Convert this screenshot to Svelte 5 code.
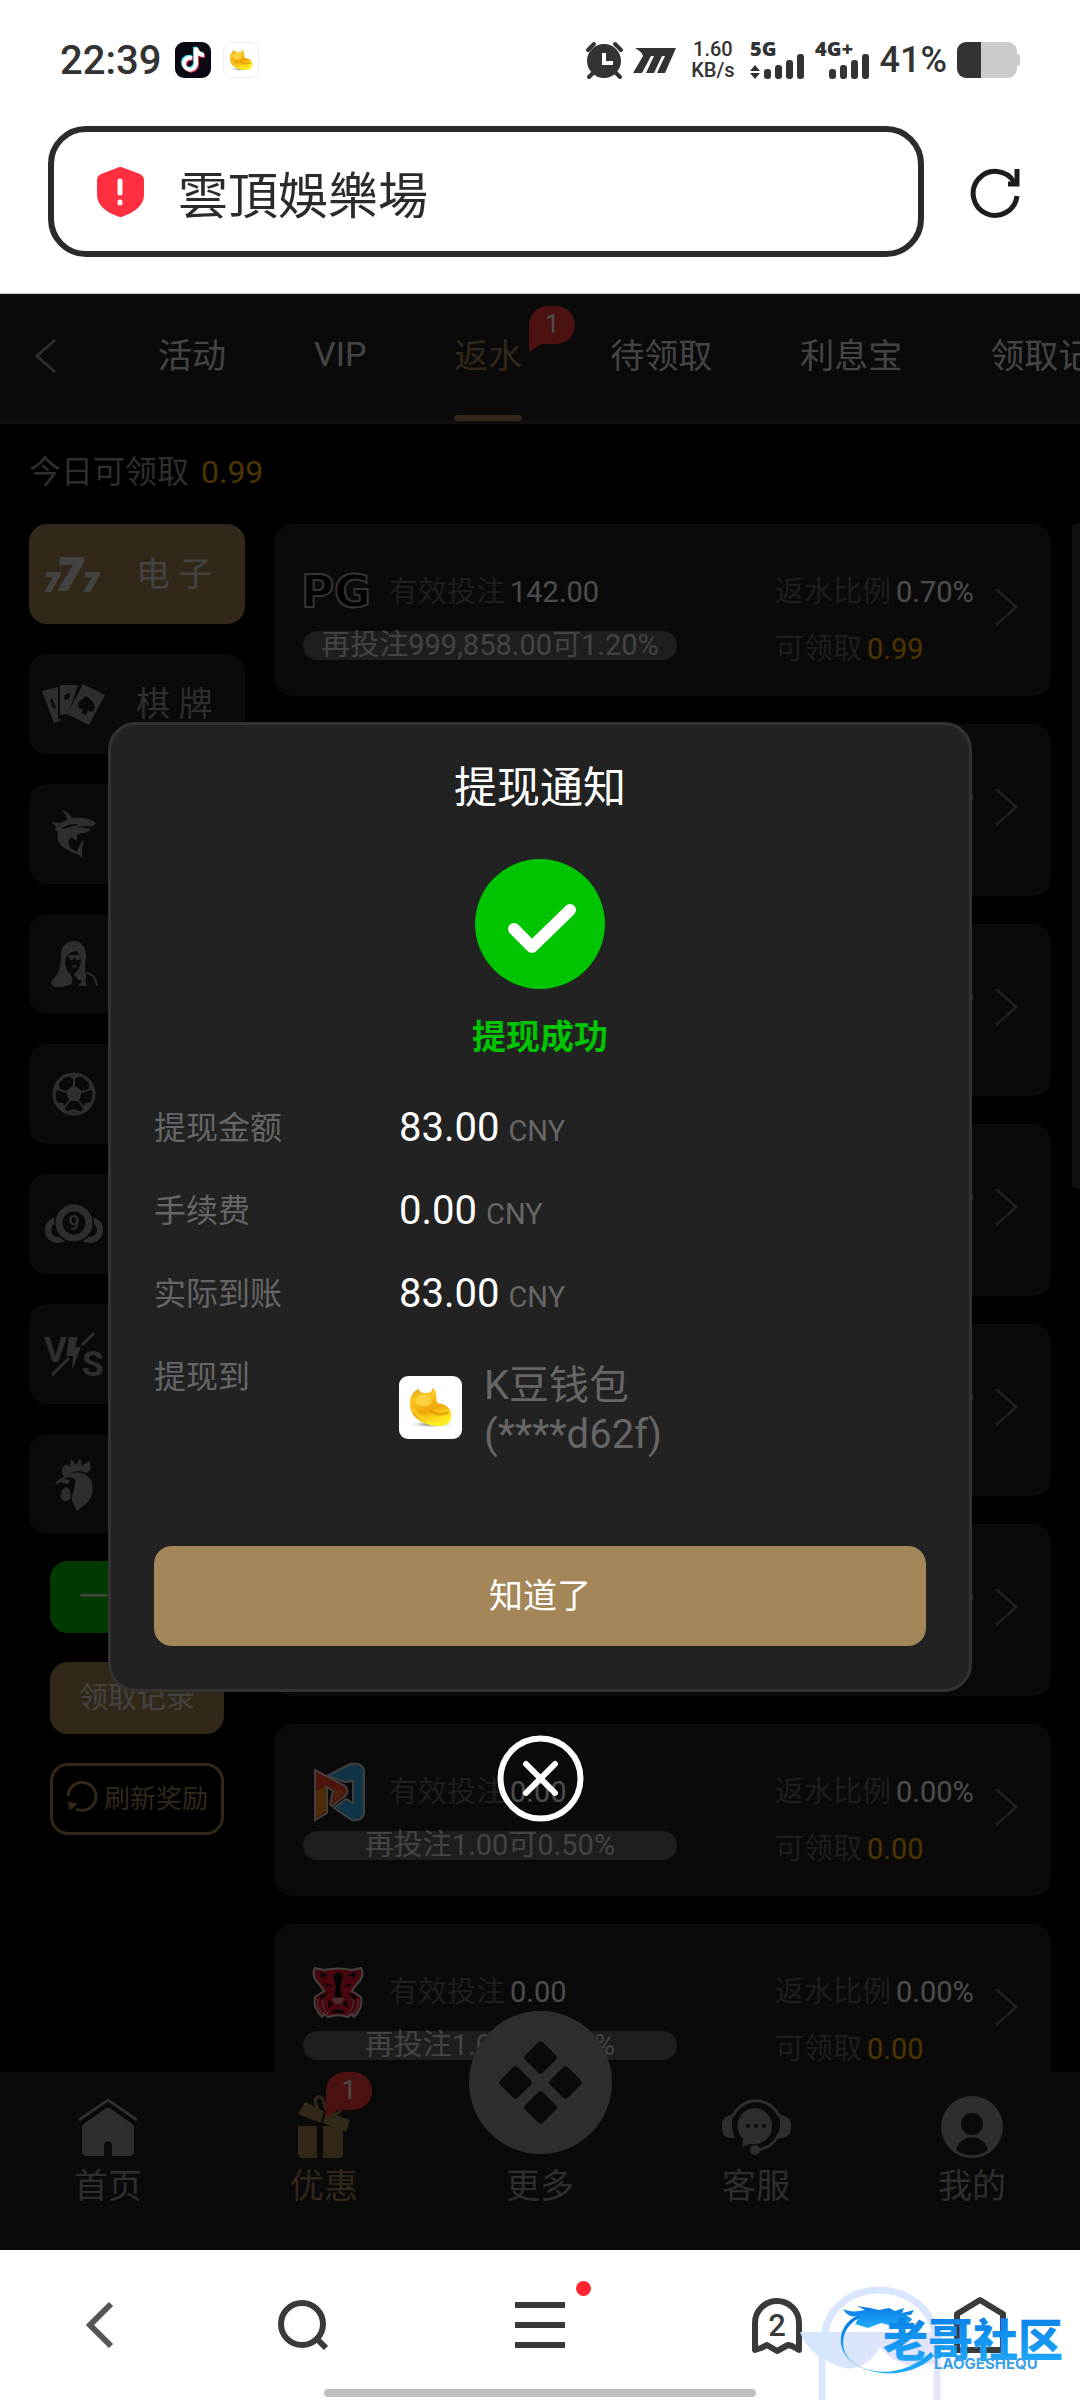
<script lang="ts">
	type Game = {
		logo: string;
		bet: string;
		tip: string;
		rate: string;
		claim: string;
	};

	const tabs = ['活动', 'VIP', '返水', '待领取', '利息宝', '领取记录'];

	const categories = [
		{ icon: 'slots', label: '电 子' },
		{ icon: 'cards', label: '棋 牌' },
		{ icon: 'shark', label: '捕 鱼' },
		{ icon: 'live', label: '真 人' },
		{ icon: 'soccer', label: '体 育' },
		{ icon: 'lottery', label: '彩 票' },
		{ icon: 'versus', label: '电 竞' },
		{ icon: 'rooster', label: '斗 鸡' }
	];

	const empty = { bet: '0.00', tip: '再投注1.00可0.50%', rate: '0.00%', claim: '0.00' };

	const games: Game[] = [
		{ logo: 'pg', bet: '142.00', tip: '再投注999,858.00可1.20%', rate: '0.70%', claim: '0.99' },
		{ logo: '', ...empty },
		{ logo: '', ...empty },
		{ logo: '', ...empty },
		{ logo: '', ...empty },
		{ logo: '', ...empty },
		{ logo: 'ribbon', ...empty },
		{ logo: 'tiger', ...empty }
	];

	const amounts = [
		{ label: '提现金额', value: '83.00' },
		{ label: '手续费', value: '0.00' },
		{ label: '实际到账', value: '83.00' }
	];

	const navItems = [
		{ icon: 'home', label: '首页' },
		{ icon: 'gift', label: '优惠' },
		{ icon: 'more', label: '更多' },
		{ icon: 'service', label: '客服' },
		{ icon: 'user', label: '我的' }
	];

	let address = $state('雲頂娛樂場');
	let activeTab = $state('返水');
	let activeCategory = $state('slots');
	let activeNav = $state('gift');
	let noticeOpen = $state(true);

	function closeNotice() {
		noticeOpen = false;
	}
</script>

{#snippet bean()}
	<svg class="bean" viewBox="0 0 64 64" aria-hidden="true">
		<defs>
			<linearGradient id="bean-fill" x1="0" y1="0" x2="0.4" y2="1">
				<stop offset="0" stop-color="#dc9a08" />
				<stop offset="0.3" stop-color="#fbc926" />
				<stop offset="0.65" stop-color="#f0a60a" />
				<stop offset="1" stop-color="#fff21c" />
			</linearGradient>
			<radialGradient id="bean-shade">
				<stop offset="0" stop-color="#555" />
				<stop offset="1" stop-color="#fff" stop-opacity="0" />
			</radialGradient>
		</defs>
		<ellipse cx="33" cy="49" rx="25" ry="4" fill="url(#bean-shade)" />
		<path
			d="M20 13c-6 3-9 8-9 15 0 13 11 22 29 23 9 0 13-5 13-11 0-7-5-11-12-12-2 0-3-3-3-6 0-5-1-8-4-10 0 4-2 5-5 5-5 1-8 0-9-4z"
			fill="url(#bean-fill)"
		/>
		<ellipse cx="25" cy="25" rx="8" ry="6" fill="#ffdc4d" opacity="0.7" />
		<path d="M14 33c5 9 16 14 32 12" fill="none" stroke="#ffd52b" stroke-width="3" opacity="0.7" />
		<path d="M31 35c5 4 12 5 19 2" fill="none" stroke="#e08c04" stroke-width="3" opacity="0.6" />
	</svg>
{/snippet}

{#snippet categoryIcon(name: string)}
	<svg class="category-icon" viewBox="0 0 60 60" fill="currentColor" aria-hidden="true">
		{#if name === 'slots'}
			<text class="seven" x="1" y="47" font-size="25">7</text>
			<text class="seven" x="40" y="47" font-size="25">7</text>
			<text class="seven" x="13" y="46" font-size="45">7</text>
		{:else if name === 'cards'}
			<path d="M-2 17 14 13v32l4 1-8 3z" />
			<path d="M16 11h18L24 40l-8 1z" />
			<path d="m39 10 22 11-16 30-22-11z" />
			<path class="hole" d="M42 22c8 5 11 11 7 15-2 1-4 1-5-1l-2 5-5-2 3-4c-3 1-6-1-6-5 1-4 5-5 8-8zM26 19c-5 0-7 4-5 7l4-1zM8 24c-3 2-2 5 0 5-1 4 1 6 4 5z" />
		{:else if name === 'shark'}
			<path d="M17 5c5 2 9 5 11 9 9-1 18 0 24 5-2 3-4 4-8 3l-14 1c7 0 14 1 17 2-3 4-8 4-13 5-3 4 1 6-3 6l-4-3c-4 5-3 8 1 12l5 3c2-6 3-9 7-12-1 4-2 8-2 12l1 7c-3-3-6-6-10-6l-7-4c-7-4-10-10-8-17l-3-2 1-3-5-5 9 1 7-3c0-5-3-8-6-11z" />
			<path class="hole" d="M18 24c6-4 12-4 17-4l-5 2-11 3z" />
		{:else if name === 'live'}
			<path d="M30 7c-8 0-13 6-13 14 0 9-1 16-5 21-4 3-6 7-4 9 4 4 14 2 19-1 3-4 1-9-3-12-2-5-4-10-2-15 3-4 7-6 10-6 3 2 5 6 5 11-2 7-4 10-7 12l4 6c7 1 9-1 8-6-2-8 0-12 0-18 0-9-5-15-12-15z" />
			<path d="M24 21h13l-2 5h-3l-1-3-2 3h-3zM27 32l7-1-3 3zM34 52l8-10c-1 5 0 7 1 10z" />
			<path d="M43 39c6 1 9 5 10 13" fill="none" stroke="currentColor" stroke-width="2" />
		{:else if name === 'soccer'}
			<circle cx="30" cy="30" r="20" fill="none" stroke="currentColor" stroke-width="3" />
			<path d="m30 21 8 6-3 10H25l-3-10z" />
			<path d="M30 11v12M47 25l-9 3M41 46l-6-9M19 46l6-9M13 25l9 3" stroke="currentColor" stroke-width="2" />
			<path d="m22 10 8 6 8-6zM45 16v9l6 5zM50 38l-9 1-3 9zM38 48l-8-3-8 3zM22 48l-3-9-9-1zM9 30l6-5v-9z" />
		{:else if name === 'lottery'}
			<circle cx="14" cy="36" r="10" fill="none" stroke="currentColor" stroke-width="6" />
			<circle cx="46" cy="36" r="10" fill="none" stroke="currentColor" stroke-width="6" />
			<circle class="hole" cx="30" cy="29" r="20" />
			<circle cx="30" cy="29" r="15" fill="none" stroke="currentColor" stroke-width="7" />
			<text x="30" y="36" font-size="20" font-weight="500" text-anchor="middle">9</text>
		{:else if name === 'versus'}
			<text x="0" y="38" font-size="35" font-weight="700">V</text>
			<text x="38" y="52" font-size="35" font-weight="700">S</text>
			<path d="M25 13h9l-3 10h6L28 46l1-14h-7z" />
			<path d="M50 9 38 21M25 34 8 51" stroke="currentColor" stroke-width="3" />
		{:else}
			<path d="M18 19c-1-6 3-9 6-8l2 2 1-8 5 6 4-7 2 8 7-5c3 5 2 9-2 12-8-3-15-2-20 3-2 2-4 0-5-3z" />
			<path d="M22 22c9-6 20-4 25 4 3 8 2 17-4 23l-10 8c-5-8-7-14-3-20 0-7 4-9-2-13l-4 6-4-1c-4-2-6 1-9 2 1-4 5-7 11-9z" />
			<path d="M22 33c4 2 6 7 4 12-3 3-7 3-9-1-1-4 1-9 5-11z" />
			<path class="hole" d="M20 25c5-3 10-2 12 2l-3-1-1 3-3-3z" />
		{/if}
	</svg>
{/snippet}

{#snippet gameLogo(name: string)}
	<svg class="game-logo" viewBox="0 0 70 58" aria-hidden="true">
		{#if name === 'pg'}
			<text class="pg" x="-2" y="44">PG</text>
		{:else if name === 'ribbon'}
			<path d="m24 13 23-12q14-2 14 8v42q-3 8-12 6L31 45l12-9 7 4V18l-8 1z" fill="#36b0f0" stroke="#d8d8d8" stroke-width="2" />
			<path d="m12 7 30 16c4 4 3 7 0 10L29 43l-2-2 3-13-6-4v26l-12 7z" fill="#ff4423" stroke="#e8d0c8" stroke-width="2" />
			<path d="M13 28v26l10-6V23z" fill="#ff9420" />
			<path d="m31 27 9 1c0 3-3 5-10 10z" fill="#ff8030" />
		{:else if name === 'tiger'}
			<path
				d="m12 5 9 2c9-2 19-2 28 0l9-2c3 5 1 12-4 16l-5 7 9 6c2 8-1 14-7 20l-2-3-4 3c-6-2-14-2-20 0l-4-3-2 3c-6-6-9-12-7-20l9-6-5-7c-5-4-7-11-4-16z"
				fill="#f01830"
				stroke="#e8d8d8"
				stroke-width="2"
			/>
			<path d="m16 9 9 3-6 3zM54 9l-9 3 6 3zM35 9l5 3-3 12 2 10h-8l2-10-3-12zM22 20l9 4-9-1zM48 20l-9 4 9-1zM16 33l10-4-8 8zM54 33l-10-4 8 8zM26 37l-1 8 5-4zM44 37l1 8-5-4zM28 50c3-5 11-5 14 0z" fill="#0a0a0a" />
			<path d="M29 35h12l-3 6h-6z" fill="#ff9a9a" />
			<path d="M15 36c-1 6 1 11 5 15M55 36c1 6-1 11-5 15M20 36c-1 6 1 11 5 15M50 36c1 6-1 11-5 15" fill="none" stroke="#ffc8c8" stroke-width="1" />
		{/if}
	</svg>
{/snippet}

{#snippet navIcon(name: string)}
	{#if name === 'home'}
		<svg class="nav-icon" viewBox="0 0 62 62" fill="currentColor" aria-hidden="true">
			<path d="M2 24 31 4l29 20" fill="none" stroke="currentColor" stroke-width="3" />
			<path d="M31 12c2 0 4 1 6 3l17 12c2 1 3 3 3 5v23c0 3-2 5-5 5H35V49c0-5-8-5-8 0v11H10c-3 0-5-2-5-5V32c0-2 1-4 3-5l17-12c2-2 4-3 6-3z" />
		</svg>
	{:else if name === 'gift'}
		<svg class="nav-icon" viewBox="0 0 62 62" fill="currentColor" aria-hidden="true">
			<path d="M5 30h19v32H9c-2 0-4-2-4-4zM30 30h20v28c0 2-2 4-4 4H30z" />
			<path d="m12 6 19 9-3 12-23-9zM33 16l24 8-4 12-23-9z" />
			<path d="M25 12c-7-8 1-16 5-8l3 10M34 14c8 8 15 3 13-4" fill="none" stroke="currentColor" stroke-width="3" />
		</svg>
	{:else if name === 'more'}
		<svg class="more-icon" viewBox="0 0 143 143" fill="currentColor" aria-hidden="true">
			<circle cx="71.5" cy="71.5" r="71.5" />
			<g class="diamonds">
				<rect x="59" y="34" width="25" height="25" rx="4" transform="rotate(45 71.5 46.5)" />
				<rect x="34" y="59" width="25" height="25" rx="4" transform="rotate(45 46.5 71.5)" />
				<rect x="84" y="59" width="25" height="25" rx="4" transform="rotate(45 96.5 71.5)" />
				<rect x="59" y="84" width="25" height="25" rx="4" transform="rotate(45 71.5 96.5)" />
			</g>
		</svg>
	{:else if name === 'service'}
		<svg class="nav-icon wide" viewBox="0 0 70 62" fill="currentColor" aria-hidden="true">
			<path d="M12 20a25 25 0 0 1 46 0M59 36c-4 10-11 17-24 18" fill="none" stroke="currentColor" stroke-width="3" />
			<path d="M13 18c-3 7-3 15 1 24-9 1-13-3-13-9v-5c0-6 5-8 12-10zM57 18c3 7 3 15-1 24 9 1 14-3 14-9v-5c0-6-6-8-13-10z" />
			<path d="M35 12a18 18 0 1 1-4 36c-4 0-7 2-10 3l1-8a18 18 0 0 1 13-31z" />
			<circle cx="34" cy="54" r="5" />
			<g class="nav-hole">
				<circle cx="27" cy="30" r="2" />
				<circle cx="35" cy="30" r="2" />
				<circle cx="43" cy="30" r="2" />
			</g>
		</svg>
	{:else}
		<svg class="nav-icon" viewBox="0 0 62 62" fill="currentColor" aria-hidden="true">
			<circle cx="31" cy="31" r="31" />
			<circle class="nav-hole" cx="31" cy="28" r="11" />
			<path class="nav-hole" d="M15 54c4-17 28-17 32 0-9 7-23 7-32 0z" />
		</svg>
	{/if}
{/snippet}

{#snippet badge()}
	<span class="badge">
		<svg viewBox="0 0 46 46" aria-hidden="true">
			<path d="M19 0h8a19 19 0 0 1 0 38H12L0 46V19A19 19 0 0 1 19 0z" fill="#ff3b3b" />
		</svg>
		<span>1</span>
	</span>
{/snippet}

<div class="screen">
	<header>
		<div class="status">
			<span class="clock">22:39</span>
			<svg class="app-icon" viewBox="0 0 36 36" aria-hidden="true">
				<rect width="36" height="36" rx="9" fill="#0b0713" />
				<g fill="none" stroke-width="4">
					<path d="M16 15a6 6 0 1 0 4 6V5c1 5 4 7 8 7" stroke="#35e5e5" />
					<path d="M18 17a6 6 0 1 0 4 6V7c1 5 4 7 8 7" stroke="#f5315c" />
					<path d="M17 16a6 6 0 1 0 4 6V6c1 5 4 7 8 7" stroke="#fff" />
				</g>
			</svg>
			<span class="app-icon bordered">{@render bean()}</span>

			<div class="status-right">
				<svg width="37" height="37" viewBox="0 0 37 37" fill="#333" aria-hidden="true">
					<circle cx="18" cy="19" r="17" />
					<path d="m2 8 6-6M29 2l6 6M7 31l-4 4M30 31l4 4" stroke="#333" stroke-width="4" stroke-linecap="round" />
					<path d="M18 11v10h9" fill="none" stroke="#fff" stroke-width="4" />
				</svg>
				<svg width="43" height="25" viewBox="0 0 43 25" fill="#333" aria-hidden="true">
					<path d="M2 0h41L32 25h-8l8-17h-3l-8 17h-8l8-17h-3L9 25H0L10 8C9 4 5 2 2 0z" />
				</svg>
				<span class="speed">1.60<br />KB/s</span>
				<svg width="55" height="37" viewBox="0 0 55 37" fill="#333" role="img" aria-label="5G">
					<text class="net" x="0" y="14">5G</text>
					<path d="m5 23 5 6H0zM5 37l5-6H0z" />
					<rect x="14" y="27" width="7" height="10" rx="3" />
					<rect x="25" y="23" width="7" height="14" rx="3" />
					<rect x="36" y="18" width="7" height="19" rx="3" />
					<rect x="47" y="12" width="7" height="25" rx="3" />
				</svg>
				<svg width="55" height="37" viewBox="0 0 55 37" fill="#333" role="img" aria-label="4G+">
					<text class="net" x="0" y="14">4G+</text>
					<rect x="14" y="27" width="7" height="10" rx="3" />
					<rect x="25" y="23" width="7" height="14" rx="3" />
					<rect x="36" y="18" width="7" height="19" rx="3" />
					<rect x="47" y="12" width="7" height="25" rx="3" />
				</svg>
				<span class="percent">41%</span>
				<svg width="63" height="36" viewBox="0 0 63 36" aria-hidden="true">
					<path d="M24 0h27a9 9 0 0 1 9 9v3h1a2 2 0 0 1 2 2v8a2 2 0 0 1-2 2h-1v3a9 9 0 0 1-9 9H24z" fill="#ccc" />
					<path d="M9 0h15v36H9a9 9 0 0 1-9-9V9a9 9 0 0 1 9-9z" fill="#333" />
				</svg>
			</div>
		</div>

		<div class="address-row">
			<label class="address">
				<svg width="47" height="50" viewBox="0 0 47 50" aria-hidden="true">
					<path d="M20 1q3-2 7 0l16 6q4 2 4 6v15c0 10-9 17-20 21q-3 2-7 0C9 45 0 38 0 28V13q0-4 4-6z" fill="#ff2f3f" />
					<path d="M23 14v12M23 35v1" stroke="#fff" stroke-width="5" stroke-linecap="round" />
				</svg>
				<input type="text" aria-label="Address" bind:value={address} />
			</label>
			<button class="plain" type="button" aria-label="Reload">
				<svg width="50" height="50" viewBox="0 0 50 50" fill="none" stroke="#1c1c1c" stroke-width="5" aria-hidden="true">
					<path d="M47 29A22 22 0 1 1 44 15" />
					<path d="M38 17h9V2" />
				</svg>
			</button>
		</div>
	</header>

	<main>
		<nav class="tabs">
			<button class="plain back" type="button" aria-label="返回">
				<svg width="22" height="34" viewBox="0 0 22 34" fill="none" stroke="currentColor" stroke-width="3" aria-hidden="true">
					<path d="M20 1 2 17l18 16" />
				</svg>
			</button>
			{#each tabs as tab}
				<button class="tab" class:active={tab === activeTab} type="button" onclick={() => (activeTab = tab)}>
					{tab}
					{#if tab === '返水'}{@render badge()}{/if}
				</button>
			{/each}
		</nav>

		<div class="content">
			<p class="today">今日可领取 <strong>0.99</strong></p>

			<div class="columns">
				<aside>
					<div class="categories">
						{#each categories as item}
							<button
								class="category"
								class:active={item.icon === activeCategory}
								type="button"
								onclick={() => (activeCategory = item.icon)}
							>
								{@render categoryIcon(item.icon)}
								<span>{item.label}</span>
							</button>
						{/each}
					</div>
					<div class="actions">
						<button class="action green" type="button">一键领取</button>
						<button class="action gold" type="button">领取记录</button>
						<button class="action outline" type="button">
							<svg width="32" height="32" viewBox="0 0 32 32" fill="none" stroke="currentColor" stroke-width="3" aria-hidden="true">
								<path d="M2 16a14 14 0 1 1 8 13" />
								<path d="m2 22 9 2-7 6z" fill="currentColor" stroke-width="1" />
							</svg>
							刷新奖励
						</button>
					</div>
				</aside>

				<div class="games">
					{#each games as game}
						<article class="game">
							<div class="bet">
								{@render gameLogo(game.logo)}
								<span class="muted">有效投注</span>
								<span>{game.bet}</span>
							</div>
							<div class="rate"><span class="muted">返水比例</span><span>{game.rate}</span></div>
							<div class="tip">{game.tip}</div>
							<div class="rate"><span class="muted">可领取</span><span class="amber">{game.claim}</span></div>
							<svg class="arrow" width="24" height="38" viewBox="0 0 24 38" fill="none" stroke="currentColor" stroke-width="3" aria-hidden="true">
								<path d="m2 1 20 18L2 37" />
							</svg>
						</article>
					{/each}
				</div>
				<div class="scrollbar"></div>
			</div>
		</div>

		<nav class="bottom-nav">
			{#each navItems as item}
				<button class="nav-item" class:active={item.icon === activeNav} type="button" onclick={() => (activeNav = item.icon)}>
					<span class="nav-figure">
						{@render navIcon(item.icon)}
						{#if item.icon === 'gift'}{@render badge()}{/if}
					</span>
					{item.label}
				</button>
			{/each}
		</nav>

		{#if noticeOpen}
			<div class="overlay">
				<div class="dialog" role="dialog" aria-modal="true" aria-labelledby="notice-title">
					<h2 id="notice-title">提现通知</h2>
					<svg class="success-icon" viewBox="0 0 130 130" aria-hidden="true">
						<circle cx="65" cy="65" r="65" fill="#00c400" />
						<path d="m39 70 18 18 38-37" fill="none" stroke="#fff" stroke-width="12" stroke-linecap="round" stroke-linejoin="round" />
					</svg>
					<p class="success">提现成功</p>
					<dl>
						{#each amounts as row}
							<div class="row">
								<dt>{row.label}</dt>
								<dd>{row.value}<span class="unit">CNY</span></dd>
							</div>
						{/each}
						<div class="row">
							<dt>提现到</dt>
							<dd class="wallet">
								<span class="wallet-icon">{@render bean()}</span>
								<span>K豆钱包<br />(****d62f)</span>
							</dd>
						</div>
					</dl>
					<button class="confirm" type="button" onclick={closeNotice}>知道了</button>
				</div>
				<button class="plain" type="button" aria-label="关闭" onclick={closeNotice}>
					<svg width="87" height="87" viewBox="0 0 87 87" fill="none" stroke="#fff" stroke-width="6" aria-hidden="true">
						<circle cx="43.5" cy="43.5" r="40" />
						<path d="m29 29 29 29M58 29 29 58" stroke-linecap="round" />
					</svg>
				</button>
			</div>
		{/if}
	</main>

	<footer>
		<button class="plain" type="button" aria-label="Back">
			<svg width="28" height="46" viewBox="0 0 28 46" fill="none" stroke="#555" stroke-width="6" aria-hidden="true">
				<path d="M25 2 4 23l21 21" />
			</svg>
		</button>
		<button class="plain" type="button" aria-label="Search">
			<svg width="50" height="52" viewBox="0 0 50 52" fill="none" stroke="#3a3a3a" stroke-width="6" aria-hidden="true">
				<circle cx="24" cy="25" r="21" />
				<path d="m38 39 10 10" />
			</svg>
		</button>
		<button class="plain menu" type="button" aria-label="Menu">
			<svg width="50" height="46" viewBox="0 0 50 46" stroke="#3a3a3a" stroke-width="6" aria-hidden="true">
				<path d="M0 3h50M0 23h50M0 43h50" />
			</svg>
			<span class="dot"></span>
		</button>
		<button class="plain" type="button" aria-label="Tabs">
			<svg width="52" height="56" viewBox="0 0 52 56" aria-hidden="true">
				<path d="M4 53V26a22 22 0 0 1 44 0v27l-7-4-4-1-11 6-10-6-6 3z" fill="none" stroke="#3a3a3a" stroke-width="6" stroke-linejoin="round" />
				<text x="26" y="39" font-size="31" text-anchor="middle" fill="#3a3a3a" font-weight="500">2</text>
			</svg>
		</button>
		<button class="plain" type="button" aria-label="Home">
			<svg width="52" height="58" viewBox="0 0 52 58" fill="none" stroke="#3a3a3a" stroke-width="6" stroke-linejoin="round" aria-hidden="true">
				<path d="M3 54V18L26 4l23 14v36z" />
			</svg>
		</button>

		<div class="home-bar"></div>

		<svg class="watermark" viewBox="0 0 300 160" aria-hidden="true">
			<defs>
				<linearGradient id="mark" x1="0" y1="0" x2="0" y2="1">
					<stop offset="0" stop-color="#0878e6" />
					<stop offset="1" stop-color="#20aefa" />
				</linearGradient>
				<linearGradient id="arch" x1="0" y1="0" x2="1" y2="0">
					<stop offset="0" stop-color="#d4e6fd" />
					<stop offset="1" stop-color="#e5e4fb" />
				</linearGradient>
			</defs>
			<path d="M45 92C49 67 72 50 99 50s51 17 56 42" fill="none" stroke="#d9e6fd" stroke-width="7" />
			<path d="M42 105v55" stroke="#dae7fd" stroke-width="7" />
			<path d="M157 90v70" stroke="#e5e5fb" stroke-width="7" />
			<path d="M20 92h136v30c-22 8-40 4-56-15-10 18-24 23-36 21-15-5-36-14-44-36z" fill="url(#arch)" />
			<path d="M90 74c-34 8-35 44-7 54 24 9 50 1 68-16l3 4c-20 20-53 22-76 10-30-17-17-54 12-52z" fill="url(#mark)" />
			<path d="M63 69c9 4 15 2 22 1l-8-4 13 2 9 2 10-2 6 3 9-3-2 5 12-3-3 5h-5l6 4c-2 6-10 5-16 4l10 3-17-1-8-2-13 5-13-4 5-8c-7 2-13 0-17-7z" fill="url(#mark)" />
			<text class="mark-title" x="103" y="117" fill="url(#mark)">老哥社区</text>
			<text class="mark-sub" x="154" y="129" fill="#3a9fe8">LAOGESHEQU</text>
		</svg>
	</footer>
</div>

<style>
	:global(body) {
		margin: 0;
	}

	.screen {
		display: flex;
		flex-direction: column;
		height: 100vh;
		background: #fff;
		font-family: Roboto, 'Noto Sans CJK SC', sans-serif;
		color: #fff;
	}

	.screen * {
		box-sizing: border-box;
	}

	button {
		margin: 0;
		padding: 0;
		border: 0;
		font: inherit;
		color: inherit;
		cursor: pointer;
	}

	svg {
		display: block;
		flex: none;
		overflow: visible;
	}

	.plain {
		display: flex;
		background: none;
	}

	header {
		padding-bottom: 36px;
		border-bottom: 1px solid #ccc;
		color: #333;
	}

	.status {
		display: flex;
		align-items: center;
		height: 120px;
		margin-bottom: 6px;
		padding: 0 60px;
	}

	.clock {
		margin-right: 14px;
		font-size: 40px;
		font-weight: 500;
	}

	.app-icon {
		width: 36px;
		height: 36px;
		margin-right: 12px;
	}

	.bordered {
		border: 1px solid #eee;
		border-radius: 8px;
	}

	.bean {
		width: 100%;
		height: 100%;
	}

	.status-right {
		display: flex;
		align-items: center;
		gap: 10px;
		margin-left: auto;
	}

	.speed {
		margin: 0 5px;
		font-size: 20px;
		font-weight: 500;
		line-height: 21px;
		text-align: center;
	}

	.net {
		font: 800 20px 'Open Sans', sans-serif;
	}

	.percent {
		font-size: 36px;
		font-weight: 500;
	}

	.address-row {
		display: flex;
		align-items: center;
		gap: 46px;
		padding: 0 60px 0 48px;
	}

	.address {
		display: flex;
		flex: 1;
		align-items: center;
		gap: 34px;
		min-width: 0;
		height: 131px;
		padding: 0 43px;
		border: 6px solid #2b2b2b;
		border-radius: 38px;
	}

	.address input {
		flex: 1;
		min-width: 0;
		padding: 0;
		border: 0;
		outline: 0;
		background: none;
		font-family: Roboto, 'Noto Sans CJK TC', sans-serif;
		font-size: 50px;
		color: #2b2b2b;
	}

	main {
		position: relative;
		display: flex;
		flex: 1;
		flex-direction: column;
		min-height: 0;
		background: #000;
	}

	.tabs {
		display: flex;
		flex: none;
		gap: 88px;
		height: 130px;
		padding-left: 35px;
		border-bottom: 3px solid #333;
		background: #222;
		overflow: hidden;
	}

	.back {
		align-items: center;
		margin-right: 13px;
		padding-bottom: 3px;
		color: #999;
	}

	.tab {
		position: relative;
		flex: none;
		padding-bottom: 8px;
		background: none;
		font-size: 34px;
		color: #e3e3e3;
	}

	.tab.active {
		color: #a48658;
	}

	.tab.active::after {
		content: '';
		position: absolute;
		right: 0;
		bottom: 0;
		left: 0;
		height: 6px;
		border-radius: 3px;
		background: #a48658;
	}

	.badge {
		position: absolute;
		width: 46px;
		height: 46px;
		font-size: 26px;
		line-height: 36px;
		text-align: center;
		color: #fff;
	}

	.badge svg {
		position: absolute;
		inset: 0;
	}

	.badge span {
		position: relative;
	}

	.tab .badge {
		top: 12px;
		left: 75px;
	}

	.content {
		flex: 1;
		min-height: 0;
		padding-top: 28px;
		overflow: hidden;
	}

	.today {
		margin: 0 0 32px;
		padding-left: 29px;
		font-size: 32px;
		line-height: 40px;
		color: #999;
	}

	.today strong {
		margin-left: 4px;
		font-weight: 400;
		color: #ffaa09;
	}

	.columns {
		position: relative;
		display: flex;
		align-items: flex-start;
		gap: 29px;
		padding: 0 29px;
	}

	aside {
		flex: none;
		width: 216px;
	}

	.categories {
		display: flex;
		flex-direction: column;
		gap: 30px;
	}

	.category {
		display: flex;
		align-items: center;
		gap: 32px;
		height: 100px;
		padding-left: 15px;
		border-radius: 18px;
		background: #222;
		font-size: 34px;
		color: #999;
	}

	.category span {
		padding-bottom: 6px;
	}

	.category.active {
		background: #a48658;
		color: #e0e0e0;
	}

	.category-icon {
		width: 60px;
		height: 60px;
	}

	.seven {
		font-style: italic;
		font-weight: 900;
		stroke: currentColor;
		stroke-width: 2px;
	}

	.hole {
		fill: #222;
	}

	.actions {
		display: flex;
		flex-direction: column;
		gap: 29px;
		padding: 27px 21px;
	}

	.action {
		display: flex;
		align-items: center;
		justify-content: center;
		gap: 6px;
		height: 72px;
		padding-bottom: 6px;
		border-radius: 18px;
		font-size: 29px;
		color: #e0e0e0;
		white-space: nowrap;
	}

	.green {
		background: #00c400;
	}

	.gold {
		background: #a48658;
	}

	.outline {
		border: 3px solid #a48658;
		background: none;
		font-size: 26px;
		color: #a48658;
	}

	.games {
		display: flex;
		flex: 1;
		flex-direction: column;
		gap: 28px;
		min-width: 0;
	}

	.game {
		position: relative;
		display: grid;
		grid-template-columns: 1fr 276px;
		align-content: start;
		height: 172px;
		padding: 39px 0 0 29px;
		border-radius: 18px;
		background: #222;
		font-size: 29px;
		line-height: 29px;
	}

	.bet {
		display: flex;
		align-items: center;
		gap: 5px;
		height: 58px;
		margin-bottom: 10px;
	}

	.game-logo {
		width: 70px;
		height: 58px;
		margin-right: 11px;
	}

	.pg {
		font: 700 45px 'DejaVu Sans', sans-serif;
		fill: #000;
		stroke: #b8a8b0;
		stroke-width: 2px;
	}

	.muted {
		color: #666;
	}

	.amber {
		color: #ffaa09;
	}

	.rate {
		display: flex;
		align-items: center;
		gap: 5px;
		height: 58px;
	}

	.tip {
		width: 374px;
		height: 29px;
		border-radius: 15px;
		background: #666;
		text-align: center;
		color: #e0e0e0;
	}

	.tip + .rate {
		height: 36px;
	}

	.arrow {
		position: absolute;
		top: 64px;
		right: 33px;
		color: #666;
	}

	.scrollbar {
		position: absolute;
		top: 0;
		right: 0;
		width: 8px;
		height: 664px;
		border-radius: 4px 0 0 4px;
		background: #333;
	}

	.bottom-nav {
		display: grid;
		flex: none;
		grid-template-columns: repeat(5, 1fr);
		height: 178px;
		background: #222;
	}

	.nav-item {
		display: flex;
		flex-direction: column;
		align-items: center;
		gap: 6px;
		padding-top: 24px;
		background: none;
		font-size: 34px;
		line-height: 44px;
		color: #999;
	}

	.nav-item.active {
		color: #a48658;
	}

	.nav-figure {
		position: relative;
		display: flex;
		align-items: flex-end;
		height: 62px;
	}

	.nav-icon {
		width: 62px;
		height: 62px;
	}

	.nav-icon.wide {
		width: 70px;
	}

	.more-icon {
		width: 143px;
		height: 143px;
		margin-bottom: 4px;
	}

	.nav-hole,
	.diamonds {
		fill: #222;
	}

	.nav-figure .badge {
		top: -24px;
		left: 33px;
	}

	.overlay {
		position: absolute;
		inset: 0;
		display: flex;
		flex-direction: column;
		align-items: center;
		justify-content: center;
		gap: 43px;
		background: rgba(0, 0, 0, 0.7);
	}

	.dialog {
		display: flex;
		flex-direction: column;
		align-items: center;
		width: 80%;
		padding: 33px 43px 43px;
		border: 3px solid #333;
		border-radius: 28px;
		background: #222;
	}

	h2 {
		margin: 0 0 41px;
		font-size: 43px;
		font-weight: 400;
		line-height: 60px;
	}

	.success-icon {
		width: 130px;
		height: 130px;
	}

	.success {
		margin: 24px 0 47px;
		font-size: 34px;
		font-weight: 700;
		line-height: 48px;
		color: #00c400;
	}

	dl {
		display: flex;
		flex-direction: column;
		gap: 43px;
		width: 100%;
		margin: 0 0 87px;
	}

	.row {
		display: flex;
	}

	dt {
		flex: none;
		width: 245px;
		font-size: 32px;
		line-height: 40px;
		color: #666;
	}

	dd {
		margin: 0;
		font-size: 40px;
		line-height: 40px;
	}

	.unit {
		margin-left: 9px;
		font-size: 29px;
		line-height: 29px;
		color: #666;
	}

	.wallet {
		display: flex;
		align-items: center;
		gap: 22px;
		padding-top: 4px;
		line-height: 49px;
		color: #666;
	}

	.wallet-icon {
		width: 63px;
		height: 63px;
		margin-bottom: 6px;
		border-radius: 9px;
		background: #fff;
	}

	.confirm {
		width: 100%;
		height: 100px;
		padding-bottom: 6px;
		border-radius: 18px;
		background: #a48658;
		font-size: 34px;
		color: #fff;
	}

	footer {
		position: relative;
		display: grid;
		flex: none;
		grid-template-columns: 200fr 206fr 268fr 206fr 200fr;
		align-items: center;
		justify-items: center;
		height: 150px;
	}

	.menu {
		position: relative;
	}

	.dot {
		position: absolute;
		top: -21px;
		right: -26px;
		width: 15px;
		height: 15px;
		border-radius: 50%;
		background: #ff2530;
	}

	.home-bar {
		position: absolute;
		bottom: 3px;
		left: 30%;
		width: 40%;
		height: 8px;
		border-radius: 4px;
		background: #bfbfbf;
	}

	.watermark {
		position: absolute;
		right: 0;
		bottom: 0;
		width: 300px;
		height: 160px;
		overflow: hidden;
		pointer-events: none;
	}

	.mark-title {
		font: 900 45px 'Noto Sans CJK SC', sans-serif;
	}

	.mark-sub {
		font: 700 15px Inter, sans-serif;
	}
</style>
